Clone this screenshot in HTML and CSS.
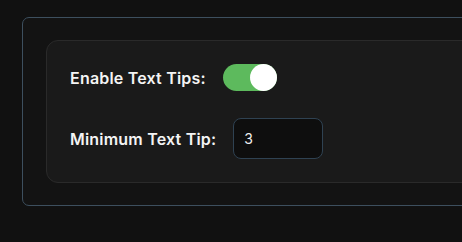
FILE: index.html
```html
<!DOCTYPE html>
<html>
<head>
<meta charset="utf-8">
<link rel="stylesheet" href="styles.css">
</head>
<body>
<div class="page">
  <div class="panel">
    <div class="card">
      <div class="row">
        <span class="label">Enable Text Tips:</span>
        <span class="toggle"><span class="knob"></span></span>
      </div>
      <div class="row">
        <span class="label">Minimum Text Tip:</span>
        <span class="input">3</span>
      </div>
    </div>
  </div>
</div>
</body>
</html>
```
FILE: styles.css
```css
html, body {
  margin: 0;
  padding: 0;
  background: #111111;
  overflow: hidden;
}
.page {
  width: 462px;
  height: 242px;
  padding: 17px 0 0 22px;
  box-sizing: border-box;
  overflow: hidden;
  font-family: "Inter", "DejaVu Sans", sans-serif;
}
.panel {
  width: 600px;
  height: 189px;
  box-sizing: border-box;
  border: 1px solid #3d4f5e;
  border-radius: 7px;
  background: #131313;
  padding: 22px 0 0 23px;
}
.card {
  width: 560px;
  height: 143px;
  box-sizing: border-box;
  border: 1px solid #2a2a2a;
  border-radius: 12px;
  background: #1a1a1a;
  padding: 23px 23px;
  display: flex;
  flex-direction: column;
  gap: 27px;
}
.row {
  display: flex;
  align-items: center;
  gap: 17px;
}
.label {
  color: #f4f4f4;
  font-size: 16px;
  font-weight: 600;
  letter-spacing: 0.2px;
}
.toggle {
  width: 54px;
  height: 27px;
  border-radius: 14px;
  background: #5dba5d;
  display: flex;
  justify-content: flex-end;
  align-items: center;
}
.knob {
  width: 27px;
  height: 27px;
  border-radius: 50%;
  background: #ffffff;
}
.input {
  width: 90px;
  height: 41px;
  box-sizing: border-box;
  border: 1px solid #2f4252;
  border-radius: 8px;
  background: #0e0e0e;
  color: #f0f0f0;
  font-size: 14px;
  padding-left: 10px;
  display: flex;
  align-items: center;
}
```
